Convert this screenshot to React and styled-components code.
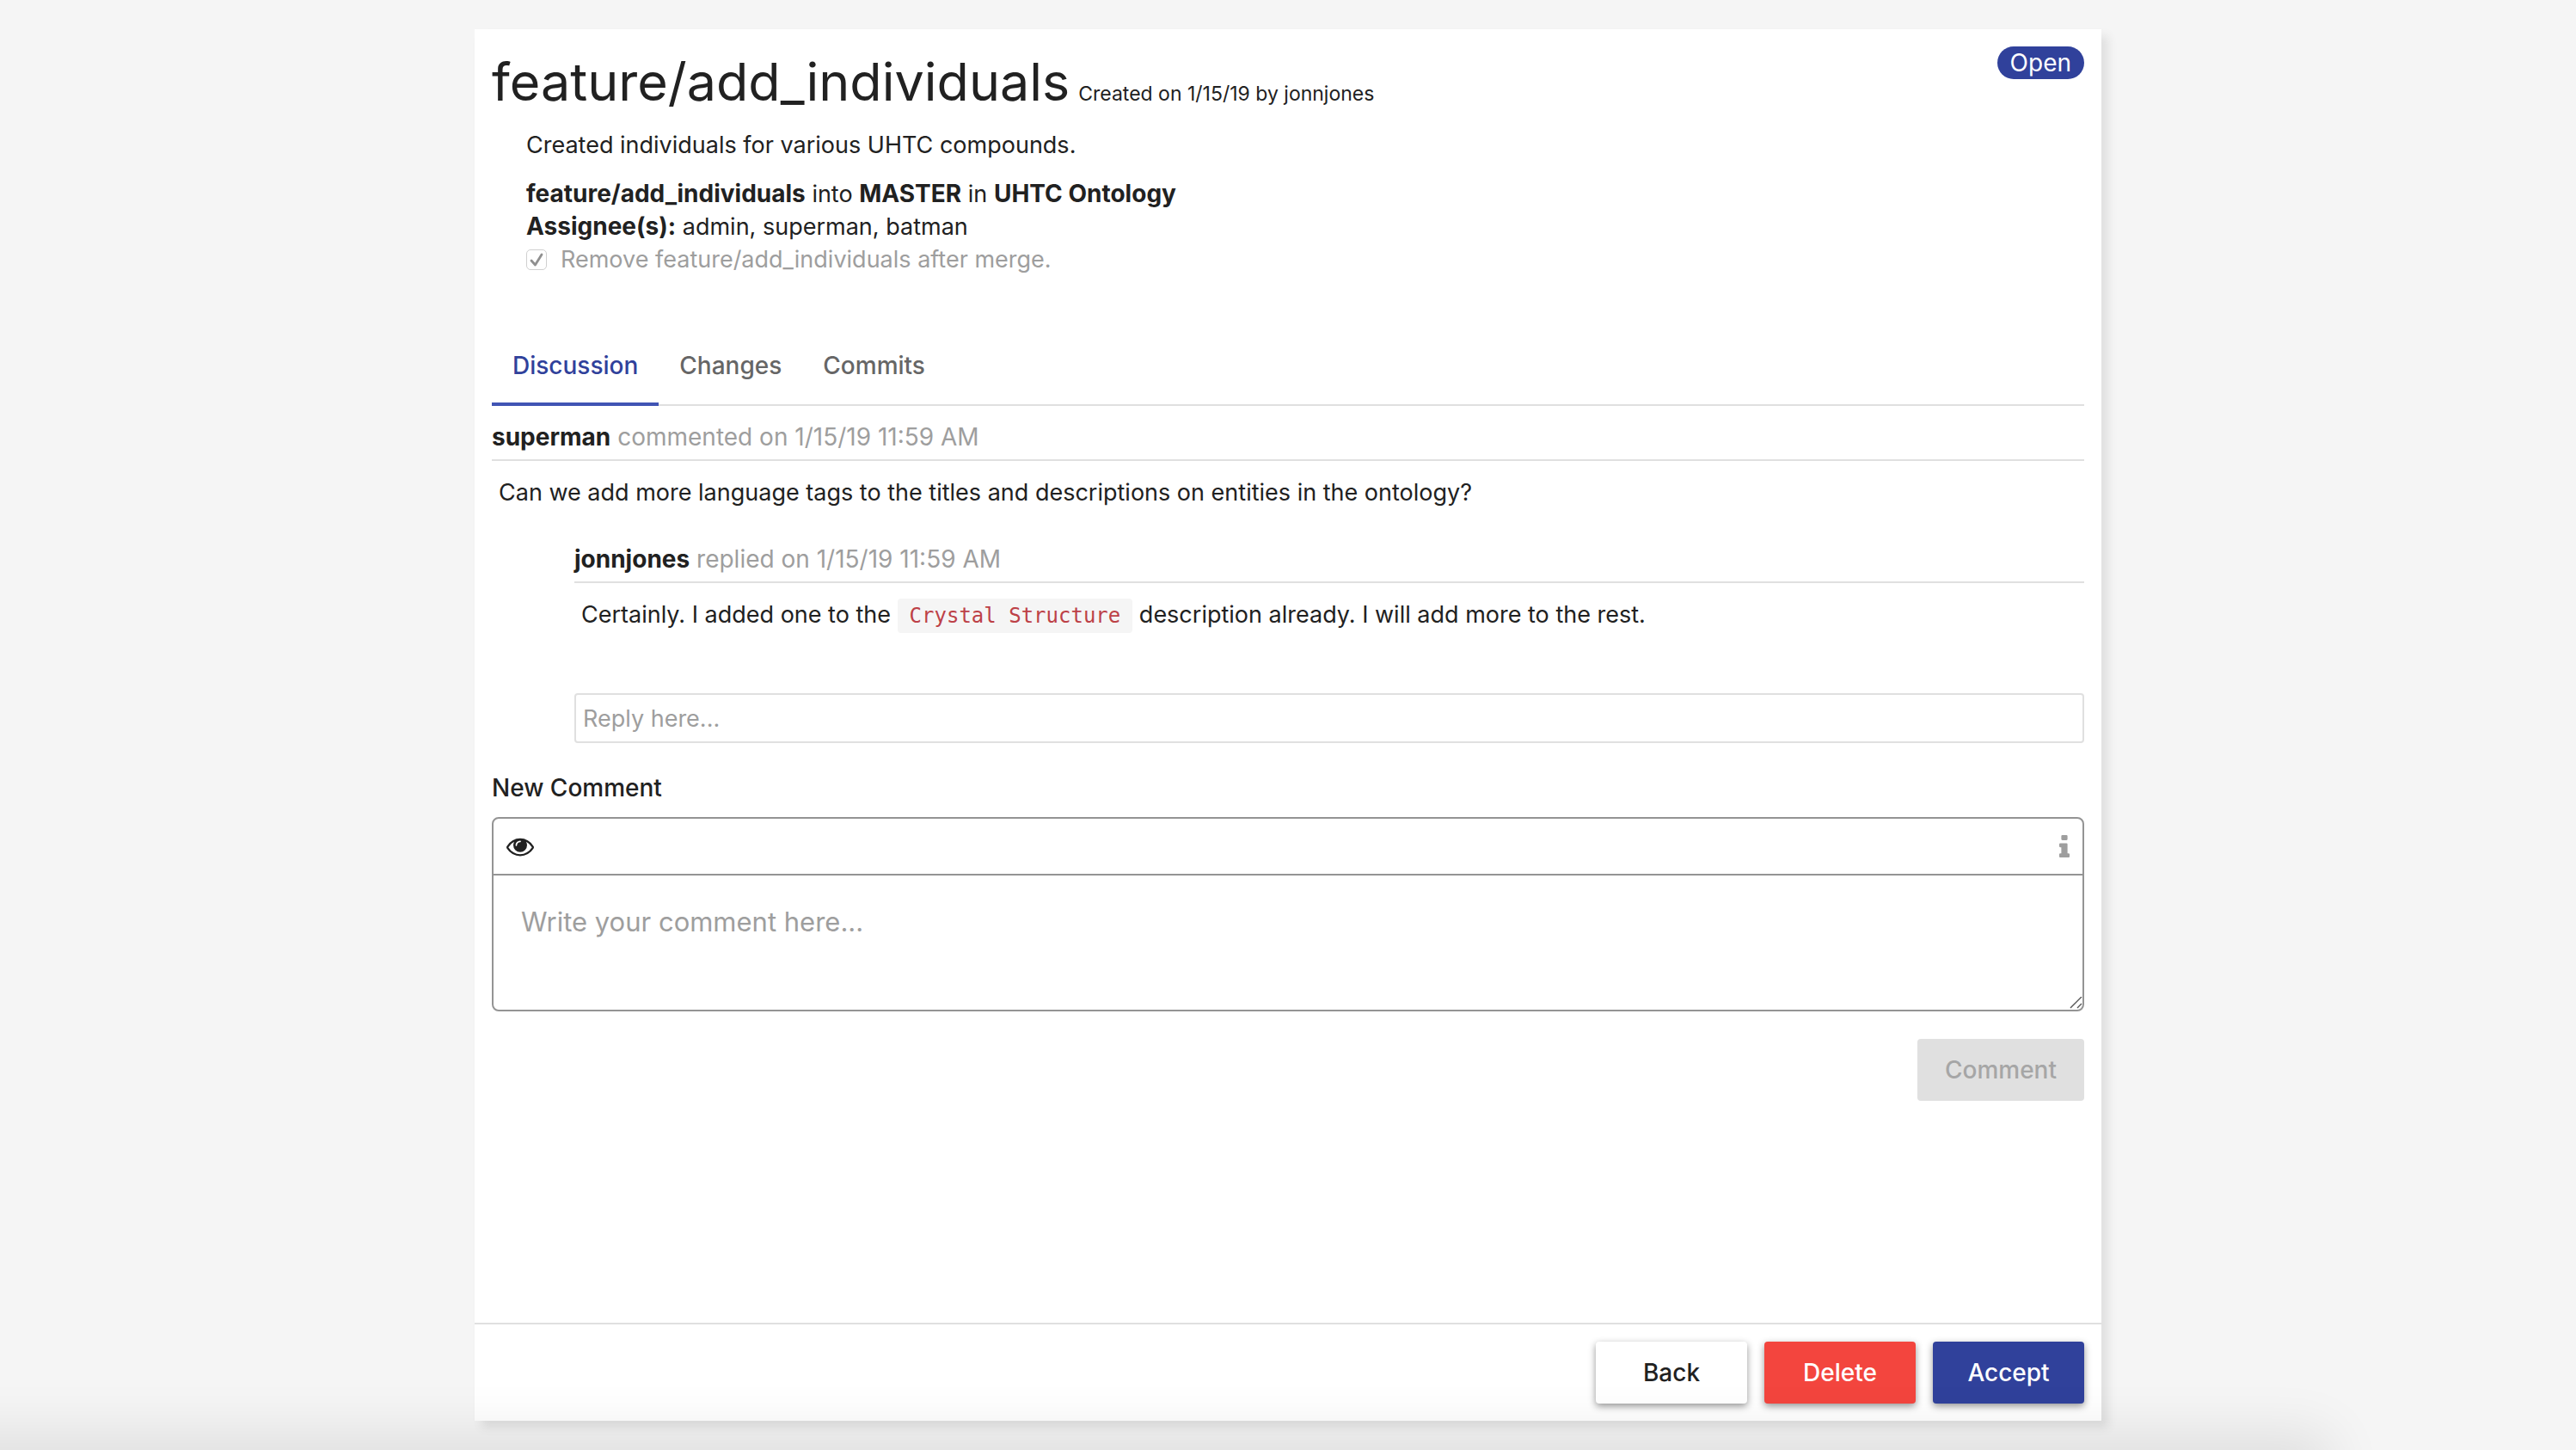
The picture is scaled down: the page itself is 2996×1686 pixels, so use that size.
import React from 'react';
import styled, { createGlobalStyle, css } from 'styled-components';

const color = {
  page: '#f5f5f5',
  line: '#e0e0e0',
  text: '#212121',
  muted: '#9e9e9e',
  tab: '#666666',
  frame: '#949494',
  primary: '#30419b',
  accent: '#4054b4',
  danger: '#f3453e',
};

const size = {
  small: '23px',
  body: '27px',
  label: '28px',
  field: '31px',
  title: '61px',
};

const GlobalStyle = createGlobalStyle`
  * { box-sizing: border-box; }
  body {
    margin: 0;
    background: ${color.page};
    color: ${color.text};
    font: 400 ${size.body}/38px Inter, "Liberation Sans", sans-serif;
  }
  button, input, textarea { font: inherit; color: inherit; margin: 0; }
  h1, h2, p { margin: 0; font-weight: 400; }
  strong { font-size: ${size.label}; font-weight: 700; line-height: 1; }
`;

const Page = styled.div`
  display: grid;
  grid-template-columns: 138fr 473fr 138fr;
  min-height: 100vh;
  padding: 34px 0;
`;

const Card = styled.main`
  grid-column: 2;
  display: flex;
  flex-direction: column;
  background: #fff;
  box-shadow: 8px 8px 10px ${color.line};
`;

const Body = styled.div`
  flex: 1;
  display: flex;
  flex-direction: column;
  padding: 20px;
`;

const Header = styled.header`
  display: flex;
  justify-content: space-between;
  align-items: flex-start;
`;

const TitleLine = styled.div`
  display: flex;
  align-items: baseline;
  gap: 10px;
`;

const Title = styled.h1`
  font-size: ${size.title};
  line-height: 82px;
`;

const Created = styled.span`
  font-size: ${size.small};
`;

const Badge = styled.span`
  padding: 0 15px;
  border-radius: 20px;
  background: ${color.primary};
  color: #fff;
  font-size: ${size.label};
`;

const Summary = styled.section`
  display: flex;
  flex-direction: column;
  padding: 14px 40px 0;
`;

const Description = styled.p`
  margin-bottom: 19px;
`;

const RemoveOption = styled.label`
  display: flex;
  align-items: center;
  gap: 16px;
  color: ${color.muted};
`;

const Checkbox = styled.input`
  appearance: none;
  width: 24px;
  height: 24px;
  border: 1px solid #d0d0d0;
  border-radius: 5px;
  background: #fff url("data:image/svg+xml,%3Csvg xmlns='http://www.w3.org/2000/svg' viewBox='0 0 24 24'%3E%3Cpath d='M6 13l4.500 5 7.500-12' fill='none' stroke='%23909090' stroke-width='2.8' stroke-linecap='round' stroke-linejoin='round'/%3E%3C/svg%3E") center / 24px;
`;

const Tabs = styled.nav`
  display: flex;
  margin-top: 55px;
  border-bottom: 2px solid ${color.line};
`;

const Tab = styled.button`
  height: 96px;
  margin-bottom: -2px;
  padding: 6px 24px 0;
  border: 0;
  border-bottom: 4px solid ${(p) => (p.$active ? color.accent : 'transparent')};
  background: none;
  color: ${(p) => (p.$active ? color.primary : color.tab)};
  font-size: ${size.label};
  font-weight: 500;
`;

const Post = styled.article`
  margin-left: ${(p) => (p.$reply ? '96px' : '0')};
`;

const PostHead = styled.div`
  padding: ${(p) => (p.$reply ? '0 0 7px' : '17px 0 7px')};
  border-bottom: 2px solid ${color.line};
  color: ${color.muted};
  font-size: ${size.label};
  strong { color: ${color.text}; }
`;

const PostText = styled.p`
  padding: 18px 8px 39px;
`;

const Code = styled.code`
  padding: 6px 14px;
  border-radius: 4px;
  background: ${color.page};
  color: #bd4147;
  font: 24px/28px "DejaVu Sans Mono", monospace;
`;

const ReplyBox = styled.input`
  height: 58px;
  margin: 33px 0 0 96px;
  padding: 0 8px;
  border: 2px solid ${color.line};
  border-radius: 4px;
  background: #fff;
  &::placeholder { color: ${color.muted}; opacity: 1; }
`;

const EditorLabel = styled.label`
  margin: 33px 0 15px;
  font-size: ${size.label};
  font-weight: 500;
`;

const Editor = styled.div`
  display: flex;
  flex-direction: column;
  border: 2px solid ${color.frame};
  border-radius: 8px;
`;

const Toolbar = styled.div`
  display: flex;
  justify-content: space-between;
  align-items: center;
  height: 66px;
  padding: 0 15px;
  border-bottom: 2px solid ${color.frame};
`;

const IconButton = styled.button`
  display: flex;
  padding: 0;
  border: 0;
  background: none;
  color: ${(p) => (p.$muted ? color.muted : color.text)};
  svg { display: block; fill: currentColor; }
`;

const CommentBox = styled.textarea`
  display: block;
  height: 156px;
  padding: 32px;
  border: 0;
  border-radius: 0 0 8px 8px;
  background: none;
  font-size: ${size.field};
  line-height: 44px;
  outline: 0;
  resize: vertical;
  &::placeholder { color: ${color.muted}; opacity: 1; }
  &::-webkit-resizer {
    background: url("data:image/svg+xml,%3Csvg xmlns='http://www.w3.org/2000/svg' viewBox='0 0 15 15'%3E%3Cpath d='M1 13L14 0M9 13L14 8' fill='none' stroke='%23555' stroke-width='1.4'/%3E%3C/svg%3E") center / 15px no-repeat;
  }
`;

const raised = css`
  box-shadow: 0 3px 8px rgba(0, 0, 0, 0.42);
`;

const fills = {
  plain: css`background: #fff; color: ${color.text}; ${raised}`,
  danger: css`background: ${color.danger}; color: #fff; ${raised}`,
  primary: css`background: ${color.primary}; color: #fff; ${raised}`,
  disabled: css`background: ${color.line}; color: #a6a6a6;`,
};

const Button = styled.button`
  min-width: 176px;
  height: 72px;
  padding: 0 32px;
  border: 0;
  border-radius: 4px;
  font-size: ${size.label};
  font-weight: 500;
  ${(p) => fills[p.$kind]}
`;

const Actions = styled.div`
  display: flex;
  justify-content: flex-end;
  gap: 20px;
  padding-top: 32px;
`;

const Footer = styled.footer`
  display: flex;
  justify-content: flex-end;
  gap: 20px;
  padding: 20px;
  border-top: 2px solid ${color.line};
`;

/* Soft shade that rises from the lower edge of the window. */
const BottomShade = styled.div`
  position: fixed;
  top: 100%;
  left: -200px;
  right: 286px;
  height: 200px;
  box-shadow: 0 -20px 60px rgba(0, 0, 0, 0.09);
  pointer-events: none;
`;

const EyeIcon = () => (
  <svg width="32" height="22" viewBox="0 320 1792 1152" overflow="visible" aria-hidden="true">
    <path d="M1664 960q-152-236-381-353 61 104 61 225 0 185-131.500 316.500t-316.500 131.500-316.500-131.500-131.500-316.500q0-121 61-225-229 117-381 353 133 205 333.500 326.500t434.500 121.500 434.500-121.500 333.500-326.500zm-720-384q0-20-14-34t-34-14q-125 0-214.500 89.500t-89.500 214.500q0 20 14 34t34 14 34-14 14-34q0-86 61-147t147-61q20 0 34-14t14-34zm848 384q0 34-20 69-140 230-376.500 368.500t-499.500 138.500-499.500-139-376.500-368q-20-35-20-69t20-69q140-229 376.500-368t499.500-139 499.500 139 376.500 368q20 35 20 69z" />
  </svg>
);

const InfoIcon = () => (
  <svg width="12" height="26" viewBox="0 128 640 1408" preserveAspectRatio="none" aria-hidden="true">
    <path d="M640 1344v128q0 26-19 45t-45 19h-512q-26 0-45-19t-19-45v-128q0-26 19-45t45-19h64v-384h-64q-26 0-45-19t-19-45v-128q0-26 19-45t45-19h384q26 0 45 19t19 45v576h64q26 0 45 19t19 45zm-128-1152v192q0 26-19 45t-45 19h-256q-26 0-45-19t-19-45v-192q0-26 19-45t45-19h256q26 0 45 19t19 45z" />
  </svg>
);

export default function App() {
  return (
    <Page>
      <GlobalStyle />
      <Card>
        <Body>
          <Header>
            <TitleLine>
              <Title>feature/add_individuals</Title>
              <Created>Created on 1/15/19 by jonnjones</Created>
            </TitleLine>
            <Badge>Open</Badge>
          </Header>
          <Summary>
            <Description>Created individuals for various UHTC compounds.</Description>
            <p>
              <strong>feature/add_individuals</strong> into <strong>MASTER</strong> in <strong>UHTC Ontology</strong>
            </p>
            <p>
              <strong>Assignee(s):</strong> admin, superman, batman
            </p>
            <RemoveOption>
              <Checkbox type="checkbox" defaultChecked disabled />
              Remove feature/add_individuals after merge.
            </RemoveOption>
          </Summary>
          <Tabs>
            <Tab type="button" $active>Discussion</Tab>
            <Tab type="button">Changes</Tab>
            <Tab type="button">Commits</Tab>
          </Tabs>
          <Post>
            <PostHead>
              <strong>superman</strong> commented on 1/15/19 11:59 AM
            </PostHead>
            <PostText>Can we add more language tags to the titles and descriptions on entities in the ontology?</PostText>
          </Post>
          <Post $reply>
            <PostHead $reply>
              <strong>jonnjones</strong> replied on 1/15/19 11:59 AM
            </PostHead>
            <PostText>
              Certainly. I added one to the <Code>Crystal Structure</Code> description already. I will add more to the rest.
            </PostText>
          </Post>
          <ReplyBox type="text" placeholder="Reply here..." aria-label="Reply" />
          <EditorLabel htmlFor="new-comment">New Comment</EditorLabel>
          <Editor>
            <Toolbar>
              <IconButton type="button" aria-label="Preview"><EyeIcon /></IconButton>
              <IconButton type="button" aria-label="Formatting help" $muted><InfoIcon /></IconButton>
            </Toolbar>
            <CommentBox id="new-comment" placeholder="Write your comment here..." />
          </Editor>
          <Actions>
            <Button type="button" $kind="disabled" disabled>Comment</Button>
          </Actions>
        </Body>
        <Footer>
          <Button type="button" $kind="plain">Back</Button>
          <Button type="button" $kind="danger">Delete</Button>
          <Button type="button" $kind="primary">Accept</Button>
        </Footer>
      </Card>
      <BottomShade />
    </Page>
  );
}
